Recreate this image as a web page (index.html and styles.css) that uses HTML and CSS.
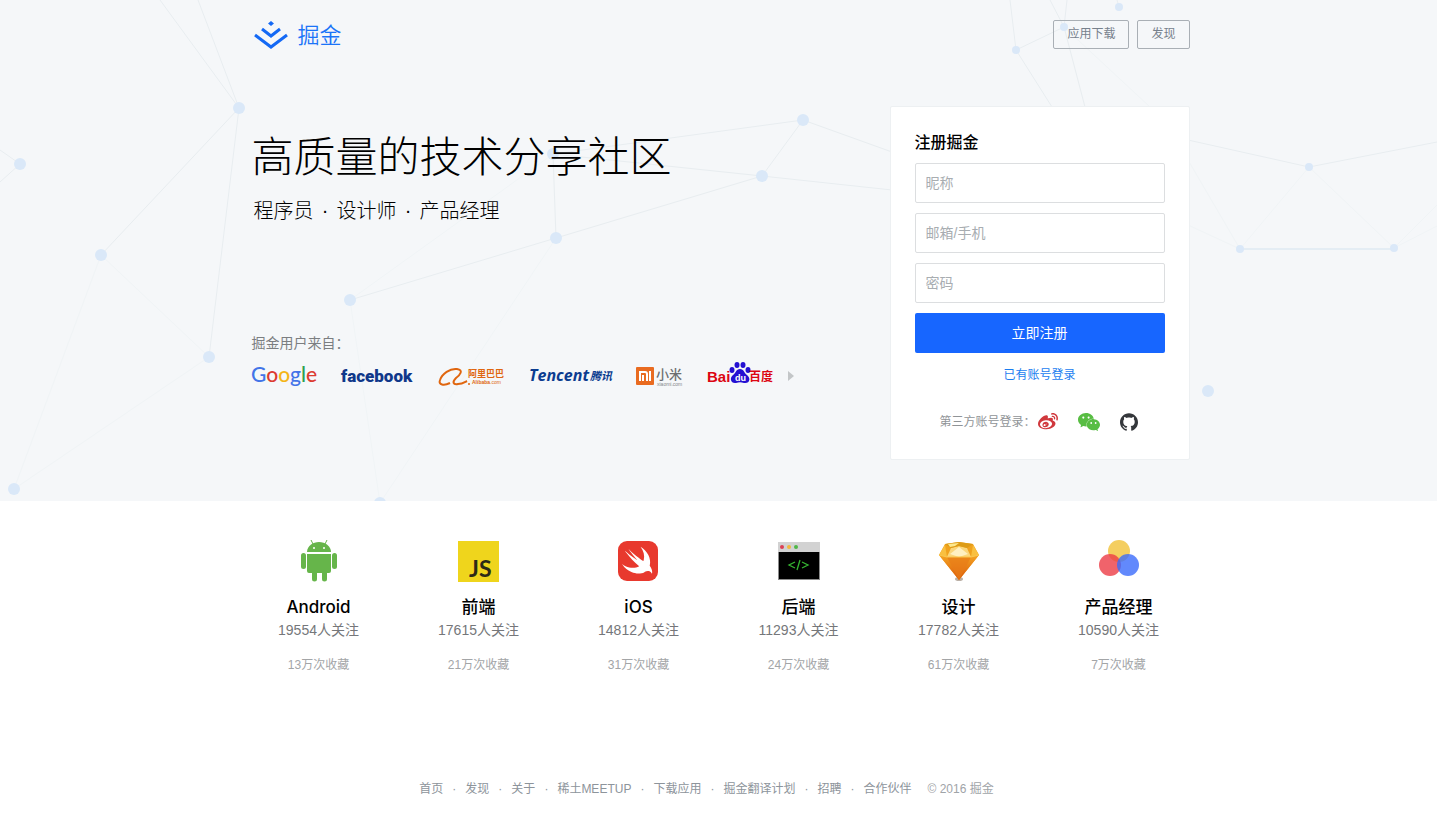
FILE: index.html
```html
<!DOCTYPE html>
<html lang="zh-CN">
<head>
<meta charset="utf-8">
<meta name="viewport" content="width=device-width, initial-scale=1">
<title>掘金</title>
<link rel="stylesheet" href="styles.css">
</head>
<body>
<section class="hero">
  <svg class="network" viewBox="0 0 1437 501" preserveAspectRatio="xMidYMid slice" aria-hidden="true">
    <g class="network-lines">
      <path d="M160 0L239 108L198 0M239 108L101 255M239 108L209 357M0 150L20 164L0 182"/>
      <path d="M556 238L553 154L803 120L762 176L553 154M350 300L556 238L762 176L892 190M803 120L892 152"/>
      <path d="M1010 0L1016 50L1064 27L1050 0M1067 0L1064 27L1085 107M1016 50L1052 107M1119 7L1117 0"/>
      <path d="M1188 140L1309 167L1437 142"/>
    </g>
    <g class="network-lines faint">
      <path d="M101 255L14 489L209 357L101 255M553 154L350 300L380 503L556 238M1064 27L1150 107M1309 167L1240 249L1188 160M1309 167L1394 248L1437 205M1240 249L1188 225M1394 248L1437 226"/>
    </g>
    <path class="network-bar" d="M1240 249H1394"/>
    <g class="network-nodes">
      <circle cx="20" cy="164" r="6"/><circle cx="239" cy="108" r="6"/><circle cx="101" cy="255" r="6"/>
      <circle cx="209" cy="357" r="6"/><circle cx="350" cy="300" r="6"/><circle cx="556" cy="238" r="6"/>
      <circle cx="553" cy="154" r="6"/><circle cx="803" cy="120" r="6"/><circle cx="762" cy="176" r="6"/>
      <circle cx="14" cy="489" r="6"/><circle cx="380" cy="503" r="6"/><circle cx="1208" cy="391" r="6"/>
      <circle cx="1119" cy="7" r="4"/><circle cx="1064" cy="27" r="4"/><circle cx="1016" cy="50" r="4"/>
      <circle cx="1309" cy="167" r="4"/><circle cx="1240" cy="249" r="4"/><circle cx="1394" cy="248" r="4"/>
    </g>
  </svg>

  <div class="container">
    <header class="site-header">
      <a class="logo" href="#">
        <svg width="36" height="30" viewBox="0 0 36 30" aria-hidden="true">
          <path d="M18 1l3 2.500-3 2.500-3-2.500z" fill="#1469f5"/>
          <path d="M9 9l9 7 9-7M2 15l16 12 16-12" fill="none" stroke="#1469f5" stroke-width="3"/>
        </svg>
        <span>掘金</span>
      </a>
      <nav class="header-nav">
        <a href="#">应用下载</a>
        <a href="#">发现</a>
      </nav>
    </header>

    <div class="hero-main">
      <div class="intro">
        <h1>高质量的技术分享社区</h1>
        <p class="roles"><span>程序员</span><i>·</i><span>设计师</span><i>·</i><span>产品经理</span></p>
        <p class="brands-label">掘金用户来自：</p>
        <div class="brands-row">
          <ul class="brands">
            <li>
              <svg width="64" height="30" viewBox="0 0 64 30">
                <text class="google" x="-1" y="21"><tspan fill="#4274e8">G</tspan><tspan fill="#dc3b31">o</tspan><tspan fill="#f4b517">o</tspan><tspan fill="#4274e8">g</tspan><tspan fill="#2ea050">l</tspan><tspan fill="#dc3b31">e</tspan></text>
              </svg>
            </li>
            <li>
              <svg width="72" height="30" viewBox="0 0 72 30"><text class="facebook" x="0" y="21">facebook</text></svg>
            </li>
            <li>
              <svg width="66" height="30" viewBox="0 0 66 30">
                <path d="M12 22C6 25 0 24 2 19C4 13 12 7 19 8C26 9 22 14 18 17C14 21 15 24 20 23C24 23 27 21 29 20" fill="none" stroke="#e0660f" stroke-width="2"/>
                <circle cx="31" cy="23" r="1" fill="#e0660f"/>
                <text class="ali-cn" x="30" y="16">阿里巴巴</text>
                <text class="ali-en" x="34" y="23">Alibaba<tspan class="ali-com">.com</tspan></text>
              </svg>
            </li>
            <li>
              <svg width="82" height="30" viewBox="0 0 82 30">
                <text class="tencent" x="0" y="20">Tencent</text>
                <text class="tencent-cn" x="61" y="19">腾讯</text>
              </svg>
            </li>
            <li>
              <svg width="47" height="30" viewBox="0 0 47 30">
                <rect y="6" width="18" height="18" rx="1" fill="#e96b20"/>
                <path d="M4 20V11H9Q11 11 11 13V20M7 14V20M14 10V20" fill="none" stroke="#fff" stroke-width="2"/>
                <text class="mi-cn" x="20" y="18">小米</text>
                <text class="mi-en" x="21" y="25">xiaomi.com</text>
              </svg>
            </li>
            <li>
              <svg width="64" height="30" viewBox="0 0 64 30">
                <text class="baidu" x="-1" y="21">Bai</text>
                <g fill="#2410d2">
                  <ellipse cx="24" cy="9" rx="2.500" ry="3"/>
                  <ellipse cx="29" cy="4" rx="2.500" ry="3"/>
                  <ellipse cx="35" cy="4" rx="2.500" ry="3"/>
                  <ellipse cx="40" cy="9" rx="2.500" ry="3"/>
                  <path d="M32 8C28 8 28 12 25 14C21 17 23 23 28 22C31 21 33 21 36 22C42 23 43 17 39 14C36 12 36 8 32 8Z"/>
                </g>
                <text class="baidu-du" x="27" y="20">du</text>
                <text class="baidu-cn" x="41" y="20">百度</text>
              </svg>
            </li>
          </ul>
          <button class="next" type="button" aria-label="下一页">
            <svg width="6" height="10" viewBox="0 0 6 10"><path d="M0 0l6 5-6 5z" fill="#c3c6c8"/></svg>
          </button>
        </div>
      </div>

      <form class="signup">
        <h2>注册掘金</h2>
        <div class="fields">
          <input type="text" placeholder="昵称" aria-label="昵称">
          <input type="text" placeholder="邮箱/手机" aria-label="邮箱/手机">
          <input type="password" placeholder="密码" aria-label="密码">
          <button class="submit" type="button">立即注册</button>
        </div>
        <a class="login" href="#">已有账号登录</a>
        <div class="social">
          <span>第三方账号登录：</span>
          <a href="#" aria-label="微博"><svg width="20" height="20" viewBox="0 1 24 24"><path fill="#d0383d" d="M10.098 20.323c-3.977.391-7.414-1.406-7.672-4.020-.259-2.609 2.759-5.047 6.740-5.441 3.979-.394 7.413 1.404 7.671 4.018.259 2.600-2.759 5.049-6.737 5.439zM9.050 17.219c-.384.616-1.208.884-1.829.602-.612-.279-.793-.991-.406-1.593.379-.595 1.176-.861 1.793-.601.622.263.820.972.442 1.592zm1.270-1.627c-.141.237-.449.353-.689.253-.236-.090-.313-.361-.177-.586.138-.227.436-.346.672-.240.239.090.315.360.180.601zm.176-2.719c-1.893-.493-4.033.450-4.857 2.118-.836 1.704-.026 3.591 1.886 4.210 1.983.640 4.318-.341 5.132-2.179.8-1.793-.201-3.642-2.161-4.149zm7.563-1.224c-.346-.105-.570-.180-.405-.615.375-.977.420-1.804 0-2.404-.781-1.112-2.915-1.053-5.364-.030 0 0-.766.331-.571-.271.376-1.217.315-2.224-.270-2.809-1.338-1.337-4.869.045-7.888 3.080C1.309 10.870 0 13.273 0 15.348c0 3.981 5.099 6.395 10.086 6.395 6.536 0 10.888-3.801 10.888-6.820 0-1.822-1.547-2.854-2.915-3.284zm1.908-5.092c-.766-.856-1.908-1.187-2.960-.962-.436.090-.706.511-.616.932.090.420.511.691.932.602.511-.105 1.067.044 1.442.465.376.421.466.977.316 1.473-.136.406.089.856.510.992.405.119.857-.105.992-.512.330-1.021.120-2.178-.646-3.035zm2.418-2.195c-1.576-1.757-3.905-2.419-6.054-1.968-.496.104-.812.587-.706 1.081.104.496.586.813 1.082.707 1.532-.331 3.185.150 4.296 1.383 1.112 1.246 1.429 2.943.947 4.416-.165.480.106 1.007.586 1.157.479.165.991-.104 1.157-.586.675-2.088.241-4.478-1.338-6.235z"/></svg></a>
          <a href="#" aria-label="微信"><svg width="22" height="22" viewBox="0 0 24 24"><path fill="#58bd43" d="M8.691 2.188C3.891 2.188 0 5.476 0 9.530c0 2.212 1.170 4.203 3.002 5.550a.59.59 0 0 1 .213.665l-.390 1.480c-.019.070-.048.141-.048.213 0 .163.130.295.290.295a.326.326 0 0 0 .167-.054l1.903-1.114a.864.864 0 0 1 .717-.098 10.160 10.160 0 0 0 2.837.403c.276 0 .543-.027.811-.050-.857-2.578.157-4.972 1.932-6.446 1.703-1.415 3.882-1.980 5.853-1.838-.576-3.583-4.196-6.348-8.596-6.348zM5.785 5.991c.642 0 1.162.529 1.162 1.180a1.170 1.170 0 0 1-1.162 1.178A1.170 1.170 0 0 1 4.623 7.170c0-.651.520-1.180 1.162-1.180zm5.813 0c.642 0 1.162.529 1.162 1.180a1.170 1.170 0 0 1-1.162 1.178 1.170 1.170 0 0 1-1.162-1.178c0-.651.520-1.180 1.162-1.180zm5.340 2.867c-1.797-.052-3.746.512-5.280 1.786-1.720 1.428-2.687 3.720-1.780 6.220.942 2.453 3.666 4.229 6.884 4.229.826 0 1.622-.120 2.361-.336a.722.722 0 0 1 .598.082l1.584.926a.272.272 0 0 0 .140.047c.134 0 .240-.111.240-.247 0-.060-.023-.120-.038-.177l-.327-1.233a.582.582 0 0 1-.023-.156.490.490 0 0 1 .201-.398C23.024 18.480 24 16.820 24 14.980c0-3.210-2.931-5.837-6.656-6.088-.135-.010-.270-.027-.406-.034zm-2.530 3.274c.535 0 .969.440.969.982a.976.976 0 0 1-.969.983.976.976 0 0 1-.969-.983c0-.542.434-.982.969-.982zm4.844 0c.535 0 .969.440.969.982a.976.976 0 0 1-.969.983.976.976 0 0 1-.969-.983c0-.542.434-.982.969-.982z"/></svg></a>
          <a href="#" aria-label="GitHub"><svg width="18" height="18" viewBox="0 0 24 24"><path fill="#34373b" d="M12 .297c-6.630 0-12 5.373-12 12 0 5.303 3.438 9.800 8.205 11.385.6.113.820-.258.820-.577 0-.285-.010-1.040-.015-2.040-3.338.724-4.042-1.610-4.042-1.610C4.422 18.070 3.633 17.700 3.633 17.700c-1.087-.744.084-.729.084-.729 1.205.084 1.838 1.236 1.838 1.236 1.070 1.835 2.809 1.305 3.495.998.108-.776.417-1.305.760-1.605-2.665-.300-5.466-1.332-5.466-5.930 0-1.310.465-2.380 1.235-3.220-.135-.303-.540-1.523.105-3.176 0 0 1.005-.322 3.300 1.230.960-.267 1.980-.399 3-.405 1.020.006 2.040.138 3 .405 2.280-1.552 3.285-1.230 3.285-1.230.645 1.653.240 2.873.120 3.176.765.840 1.230 1.910 1.230 3.220 0 4.610-2.805 5.625-5.475 5.920.420.360.810 1.096.810 2.220 0 1.606-.015 2.896-.015 3.286 0 .315.210.690.825.570C20.565 22.092 24 17.592 24 12.297c0-6.627-5.373-12-12-12"/></svg></a>
        </div>
      </form>
    </div>
  </div>
</section>

<main class="topics">
  <article class="topic">
    <svg width="42" height="42" viewBox="0 0 42 42" aria-hidden="true">
      <g fill="#66b54a">
        <path d="M9 12C9 6 15 2 21 2S33 6 33 12Z"/>
        <path d="M9 14H33V31Q33 33 31 33H29V39A2.500 2.500 0 0 1 24 39V33H19V39A2.500 2.500 0 0 1 14 39V33H11Q9 33 9 31Z"/>
        <rect x="3" y="13" width="5" height="16" rx="2.500"/><rect x="34" y="13" width="5" height="16" rx="2.500"/>
      </g>
      <path d="M15 4L13 0M27 4L29 0" stroke="#66b54a"/>
      <circle cx="16" cy="8" r="1" fill="#fff"/><circle cx="26" cy="8" r="1" fill="#fff"/>
    </svg>
    <h3>Android</h3><p class="followers">19554人关注</p><p class="saves">13万次收藏</p>
  </article>
  <article class="topic">
    <svg width="42" height="42" viewBox="0 0 42 42" aria-hidden="true">
      <rect y="1" width="41" height="41" fill="#efd51c"/><text class="js" x="11" y="37">JS</text>
    </svg>
    <h3>前端</h3><p class="followers">17615人关注</p><p class="saves">21万次收藏</p>
  </article>
  <article class="topic">
    <svg width="42" height="42" viewBox="0 0 42 42" aria-hidden="true">
      <rect y="1" width="40" height="40" rx="9" fill="#e8392e"/>
      <svg y="1" width="40" height="40" viewBox="0 0 24 24"><path fill="#fff" d="M13.543 3.410c4.114 2.470 6.545 7.162 5.549 11.131-.024.093-.050.181-.076.272l.002.001c2.062 2.538 1.500 5.258 1.236 4.745-1.072-2.086-3.066-1.568-4.088-1.043a6.803 6.803 0 0 1-.281.158l-.020.012-.002.002c-2.115 1.123-4.957 1.205-7.812-.022a12.568 12.568 0 0 1-5.640-4.838c.649.480 1.350.902 2.097 1.252 3.019 1.414 6.051 1.311 8.197-.002C9.651 12.730 7.101 9.670 5.146 7.191a10.628 10.628 0 0 1-1.005-1.384c2.340 2.142 6.038 4.830 7.365 5.576C8.690 8.408 6.208 4.743 6.324 4.860c4.436 4.466 8.527 6.996 8.527 6.996.154.085.270.154.360.213.085-.215.160-.437.224-.668.708-2.588-.090-5.548-1.893-7.992z"/></svg>
    </svg>
    <h3>iOS</h3><p class="followers">14812人关注</p><p class="saves">31万次收藏</p>
  </article>
  <article class="topic">
    <svg width="42" height="42" viewBox="0 0 42 42" aria-hidden="true">
      <rect y="2" width="42" height="38" fill="#8c8c8c"/><rect y="2" width="42" height="10" fill="#d2d2d2"/>
      <rect x="1" y="12" width="40" height="27" fill="#000"/>
      <circle cx="4" cy="7" r="2" fill="#dc4055"/><circle cx="11" cy="7" r="2" fill="#f4b83c"/><circle cx="18" cy="7" r="2" fill="#4fb848"/>
      <path d="M17 22L11 25L17 28M24 22L30 25L24 28M22 20L19 30" fill="none" stroke="#35b531" stroke-width="1.300"/>
    </svg>
    <h3>后端</h3><p class="followers">11293人关注</p><p class="saves">24万次收藏</p>
  </article>
  <article class="topic">
    <svg width="42" height="42" viewBox="0 0 42 42" aria-hidden="true">
      <defs><linearGradient id="gem" x1="0" y1="0" x2="0" y2="1"><stop offset="0" stop-color="#f5a623"/><stop offset="1" stop-color="#d9560b"/></linearGradient></defs>
      <ellipse cx="21" cy="39" rx="4" ry="2" fill="#bbb0a6"/>
      <path d="M7 4L21 2L35 4L41 15L21 40L1 15Z" fill="#f0a21e"/>
      <path d="M1 15L9 17H33L41 15L21 40Z" fill="url(#gem)"/>
      <path d="M9 17L21 40L33 17Z" fill="#e87c18" fill-opacity=".7"/>
      <path d="M9 17L13 8L21 6L29 8L33 17Z" fill="#fbd67b"/>
      <path d="M12 14L21 7L30 14L21 17Z" fill="#fff0c1"/>
      <path d="M7 4L21 2L35 4L29 8L21 6L13 8Z" fill="#dd9c16"/>
      <path d="M10 4L21 3L17 6L12 7Z" fill="#fde88d"/>
      <path d="M1 15L7 5L9 17ZM41 15L35 5L33 17Z" fill="#f9c040"/>
      <path d="M1 15L9 17H33L41 15" fill="none" stroke="#fbc751"/>
    </svg>
    <h3>设计</h3><p class="followers">17782人关注</p><p class="saves">61万次收藏</p>
  </article>
  <article class="topic">
    <svg width="42" height="42" viewBox="0 0 42 42" aria-hidden="true">
      <circle cx="21" cy="11" r="11" fill="#f4ce60"/>
      <circle cx="12" cy="25" r="11" fill="#ec3c46" fill-opacity=".8"/>
      <circle cx="30" cy="25" r="11" fill="#3b6cfb" fill-opacity=".8"/>
    </svg>
    <h3>产品经理</h3><p class="followers">10590人关注</p><p class="saves">7万次收藏</p>
  </article>
</main>

<footer class="site-footer">
  <a href="#">首页</a><i>·</i><a href="#">发现</a><i>·</i><a href="#">关于</a><i>·</i><a href="#">稀土MEETUP</a><i>·</i><a href="#">下载应用</a><i>·</i><a href="#">掘金翻译计划</a><i>·</i><a href="#">招聘</a><i>·</i><a href="#">合作伙伴</a>
  <span class="copyright">© 2016 掘金</span>
</footer>
</body>
</html>
```

FILE: styles.css
```css
* {
  box-sizing: border-box;
}

body {
  margin: 0;
  background: #fff;
  color: #000;
  font: 14px/20px "Liberation Sans", "Noto Sans CJK SC", sans-serif;
}

h1, h2, h3, p, ul {
  margin: 0;
  padding: 0;
}

ul {
  list-style: none;
}

a {
  text-decoration: none;
  color: inherit;
}

i {
  font-style: normal;
  text-align: center;
}

svg {
  display: block;
  overflow: visible;
}

input, button {
  font: inherit;
}

.hero {
  position: relative;
  overflow: hidden;
  padding-bottom: 41px;
  background: #f5f7f9;
}

.network {
  position: absolute;
  inset: 0;
  width: 100%;
  height: 100%;
}

.network-lines {
  fill: none;
  stroke: #e8edf0;
}

.network-lines.faint {
  stroke: #f0f4f6;
}

.network-bar {
  stroke: #e4edf4;
  stroke-width: 2;
}

.network-nodes {
  fill: #dae8f8;
}

.container {
  position: relative;
  max-width: 960px;
  margin: 0 auto;
  padding: 0 9px 0 13px;
}

.site-header {
  display: flex;
  justify-content: space-between;
  align-items: flex-start;
  padding-top: 20px;
  min-height: 106px;
}

.logo {
  display: flex;
  align-items: flex-start;
  gap: 9px;
  padding-left: 1px;
  color: #1b74f8;
  font: 350 22px/26px "Noto Sans CJK SC", sans-serif;
}

.header-nav {
  display: flex;
  gap: 8px;
}

.header-nav a {
  padding: 0 13px;
  border: 1px solid #a9afb5;
  border-radius: 2px;
  color: #77818c;
  font-size: 12px;
  line-height: 27px;
}

.hero-main {
  display: flex;
  justify-content: space-between;
}

.intro {
  padding-top: 18px;
}

.intro h1 {
  font: 300 42px/60px "Noto Sans CJK SC", sans-serif;
}

.roles {
  display: flex;
  margin-top: 12px;
  padding-left: 2px;
  font: 300 20px/28px "Noto Sans CJK SC", sans-serif;
}

.roles i {
  width: 23px;
  font-family: "Liberation Sans", sans-serif;
}

.brands-label {
  margin-top: 109px;
  color: #7b7e81;
}

.brands-row {
  display: flex;
  align-items: center;
  gap: 16px;
  margin-top: 8px;
}

.brands {
  display: flex;
  gap: 25px;
}

.google {
  font: 500 21px Lato, sans-serif;
}

.facebook {
  fill: #10388a;
  font: 900 17px Roboto, sans-serif;
}

.ali-cn {
  fill: #e0660f;
  font: bold 9px "Noto Sans CJK SC", sans-serif;
}

.ali-en {
  fill: #e0660f;
  font: bold 5px "Liberation Sans", sans-serif;
}

.ali-com {
  font-weight: normal;
}

.tencent {
  fill: #0b3c90;
  font: italic bold 16px "Open Sans", sans-serif;
}

.tencent-cn {
  fill: #0b3c90;
  font: italic bold 11px "Noto Sans CJK SC", sans-serif;
}

.mi-cn {
  fill: #6c6e70;
  font: 500 13px "Noto Sans CJK SC", sans-serif;
}

.mi-en {
  fill: #85888b;
  font: 5px "Liberation Sans", sans-serif;
}

.baidu {
  fill: #dc0612;
  font: bold 15px "Liberation Sans", sans-serif;
}

.baidu-cn {
  fill: #dc0612;
  font: bold 12px "Noto Sans CJK SC", sans-serif;
}

.baidu-du {
  fill: #fff;
  font: bold 9px "Liberation Sans", sans-serif;
}

.next {
  padding: 0;
  border: 0;
  background: none;
}

.signup {
  flex: 0 0 300px;
  padding: 23px 24px 25px;
  border: 1px solid #edf0f2;
  border-radius: 2px;
  background: #fff;
}

.signup h2 {
  font: 500 16px/22px "Noto Sans CJK SC", sans-serif;
}

.fields {
  display: grid;
  gap: 10px;
  margin-top: 11px;
}

.fields input {
  width: 100%;
  height: 40px;
  padding: 0 10px;
  border: 1px solid #dcdee0;
  border-radius: 2px;
  background: #fff;
}

.fields input::placeholder {
  color: #a8adb1;
}

.submit {
  height: 40px;
  border: 0;
  border-radius: 2px;
  background: #1766ff;
  color: #fff;
}

.login {
  display: block;
  margin-top: 12px;
  color: #1a7df0;
  font-size: 12px;
  text-align: center;
}

.social {
  display: flex;
  align-items: center;
  gap: 20px;
  height: 24px;
  margin-top: 25px;
  padding-left: 25px;
  color: #909497;
  font-size: 12px;
}

.social span {
  margin-right: -18px;
}

.topics {
  display: grid;
  grid-template-columns: repeat(6, 1fr);
  max-width: 960px;
  margin: 0 auto;
  padding-top: 39px;
}

.topic {
  display: flex;
  flex-direction: column;
  align-items: center;
}

.topic h3 {
  margin-top: 13px;
  font: 500 17px/24px Inter, "Noto Sans CJK SC", sans-serif;
}

.followers {
  color: #75777a;
  line-height: 22px;
}

.saves {
  margin-top: 14px;
  color: #a3a5a7;
  font-size: 12px;
}

.js {
  fill: #2b2a17;
  font: bold 23px Lato, sans-serif;
}

.site-footer {
  display: flex;
  justify-content: center;
  padding: 104px 24px 36px 0;
  color: #8d949b;
  font-size: 12px;
}

.site-footer i {
  width: 22px;
}

.copyright {
  margin-left: 16px;
  color: #9fa4a8;
}
```
